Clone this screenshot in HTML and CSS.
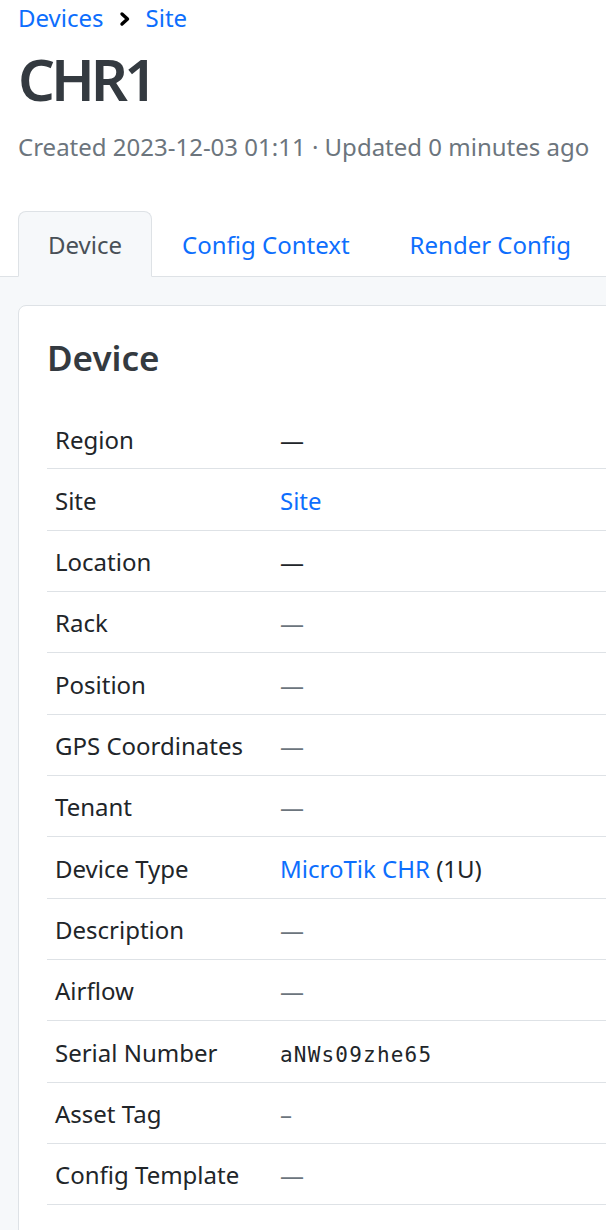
FILE: index.html
```html
<!DOCTYPE html>
<html lang="en">
<head>
<meta charset="utf-8">
<title>CHR1</title>
<link rel="stylesheet" href="styles.css">
</head>
<body>
<header class="page-header">
  <nav class="breadcrumb">
    <a href="#">Devices</a>
    <svg class="crumb-sep" width="12" height="16" viewBox="0 0 12 16" aria-hidden="true"><path d="M3 3 L8.5 8 L3 13" fill="none" stroke="#000" stroke-width="3.4" stroke-linecap="round" stroke-linejoin="round"/></svg>
    <a href="#">Site</a>
  </nav>
  <h1 class="title">CHR1</h1>
  <p class="meta">Created 2023-12-03 01:11 · Updated 0 minutes ago</p>
</header>
<ul class="tabs">
  <li><a class="tab active" href="#">Device</a></li>
  <li><a class="tab" href="#">Config Context</a></li>
  <li><a class="tab" href="#">Render Config</a></li>
</ul>
<main class="content">
  <section class="card">
    <h2 class="card-title">Device</h2>
    <table class="attrs">
      <tr><th>Region</th><td class="dark">—</td></tr>
      <tr><th>Site</th><td><a href="#">Site</a></td></tr>
      <tr><th>Location</th><td class="dark">—</td></tr>
      <tr><th>Rack</th><td class="muted">—</td></tr>
      <tr><th>Position</th><td class="muted">—</td></tr>
      <tr><th>GPS Coordinates</th><td class="muted">—</td></tr>
      <tr><th>Tenant</th><td class="muted">—</td></tr>
      <tr><th>Device Type</th><td><a href="#">MicroTik CHR</a> (1U)</td></tr>
      <tr><th>Description</th><td class="muted">—</td></tr>
      <tr><th>Airflow</th><td class="muted">—</td></tr>
      <tr><th>Serial Number</th><td><span class="mono">aNWs09zhe65</span></td></tr>
      <tr><th>Asset Tag</th><td class="muted">–</td></tr>
      <tr><th>Config Template</th><td class="muted">—</td></tr>
    </table>
  </section>
</main>
</body>
</html>
```
FILE: styles.css
```css
html, body {
  margin: 0;
  padding: 0;
  overflow-x: hidden;
}
body {
  font-family: "Noto Sans", "DejaVu Sans", sans-serif;
  font-size: 24px;
  line-height: 36px;
  color: #212529;
  background: #fff;
}
a {
  color: #0d6efd;
  text-decoration: none;
}
.page-header {
  padding: 0 18px;
}
.breadcrumb {
  display: flex;
  align-items: center;
  gap: 15px;
  height: 36px;
}
.crumb-sep {
  display: block;
  margin-top: 1px;
}
.title {
  margin: 8px 0 0;
  font-size: 58px;
  line-height: 70px;
  font-weight: 600;
  color: #343a40;
  letter-spacing: -4px;
}
.meta {
  margin: 15px -20px 0 0;
  color: #6c757d;
  white-space: nowrap;
}
.tabs {
  list-style: none;
  margin: 46px 0 0;
  padding: 0 0 0 18px;
  display: flex;
  border-bottom: 1px solid #dee2e6;
}
.tabs li {
  margin-bottom: -1px;
}
.tab {
  display: block;
  padding: 15px 29px 13px;
  border: 1px solid transparent;
  border-top-left-radius: 8px;
  border-top-right-radius: 8px;
}
.tab.active {
  color: #495057;
  background: #f6f8fa;
  border-color: #dee2e6 #dee2e6 #f6f8fa;
}
.content {
  background: #f6f8fa;
  padding: 28px 0 0 18px;
  min-height: 960px;
  overflow: hidden;
}
.card {
  background: #fff;
  border: 1px solid #dee2e6;
  border-radius: 8px;
  padding: 31px 28px 40px;
  margin-right: -60px;
}
.card-title {
  margin: 0 0 29px;
  font-size: 35px;
  line-height: 42px;
  font-weight: 600;
  color: #343a40;
}
.attrs {
  width: 100%;
  border-collapse: collapse;
}
.attrs th,
.attrs td {
  padding: 13.5px 8px 10.5px;
  height: 36.33px;
  line-height: 36.33px;
  border-bottom: 1px solid #dee2e6;
  text-align: left;
  vertical-align: top;
}
.attrs th {
  width: 209px;
  font-weight: 400;
  color: #212529;
}
.attrs td.dark {
  color: #212529;
}
.attrs td.muted {
  color: #6c757d;
}
.mono {
  font-family: "DejaVu Sans Mono", "Liberation Mono", monospace;
  font-size: 21px;
  line-height: 1;
  letter-spacing: 1.2px;
}
```
